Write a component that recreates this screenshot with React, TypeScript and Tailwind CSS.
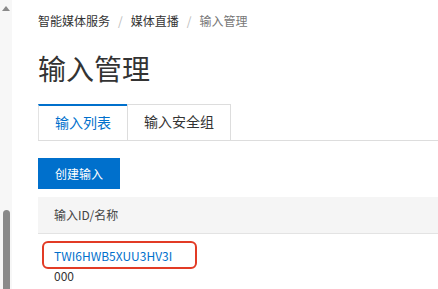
export default function App() {
  return (
    <div className="flex h-[289px] w-[438px] overflow-hidden bg-white font-['Noto_Sans_CJK_SC',sans-serif] text-[#333]">
      {/* Scrollbar */}
      <div className="flex w-[12px] shrink-0 flex-col items-center bg-[#f7f7f7]">
        <div className="mt-[6px] h-0 w-0 border-x-[4px] border-b-[5px] border-x-transparent border-b-[#8a8a8a]" />
        <div className="flex-1" />
        <div className="h-[79px] w-[7px] rounded-t-full bg-[#8a8a8a]" />
      </div>

      {/* Page */}
      <div className="flex-1 pl-[26px] pt-[12px]">
        <div className="flex items-center gap-[8px] text-[12px] leading-[18px]">
          <span className="text-[#333]">智能媒体服务</span>
          <span className="text-[#bbb]">/</span>
          <span className="text-[#333]">媒体直播</span>
          <span className="text-[#bbb]">/</span>
          <span className="text-[#777]">输入管理</span>
        </div>

        <h1 className="mt-[20px] text-[28px] leading-[36px] font-normal text-[#333]">输入管理</h1>

        {/* Tabs */}
        <div className="mt-[18px] flex border-b border-[#ddd]">
          <div className="-mb-px flex h-[36px] w-[89px] items-center justify-center border-l border-t-2 border-[#e3e3e3] border-t-[#0070cc] bg-white pb-[2px] text-[14px] text-[#0070cc]">
            输入列表
          </div>
          <div className="flex h-[36px] w-[104px] items-center justify-center border-x border-t border-[#ddd] pb-[2px] text-[14px] text-[#333]">
            输入安全组
          </div>
        </div>

        <button className="mt-[17px] flex h-[31px] w-[82px] items-center justify-center bg-[#0070cc] text-[12px] text-white">
          创建输入
        </button>

        {/* Table */}
        <div className="mt-[8px]">
          <div className="flex h-[37px] items-center border-b border-[#e3e3e3] bg-[#f5f5f5] pl-[16px] text-[12px] text-[#444]">
            输入ID/名称
          </div>
          <div className="relative pl-[16px] pt-[12px] text-[12px] leading-[20px]">
            <div className="text-[#0070cc]">TWI6HWB5XUU3HV3I</div>
            <div className="text-[#333]">000</div>
            <div className="absolute left-[4px] top-[7px] h-[28px] w-[155px] rounded-[6px] border-2 border-[#e23b25]" />
          </div>
        </div>
      </div>
    </div>
  );
}
